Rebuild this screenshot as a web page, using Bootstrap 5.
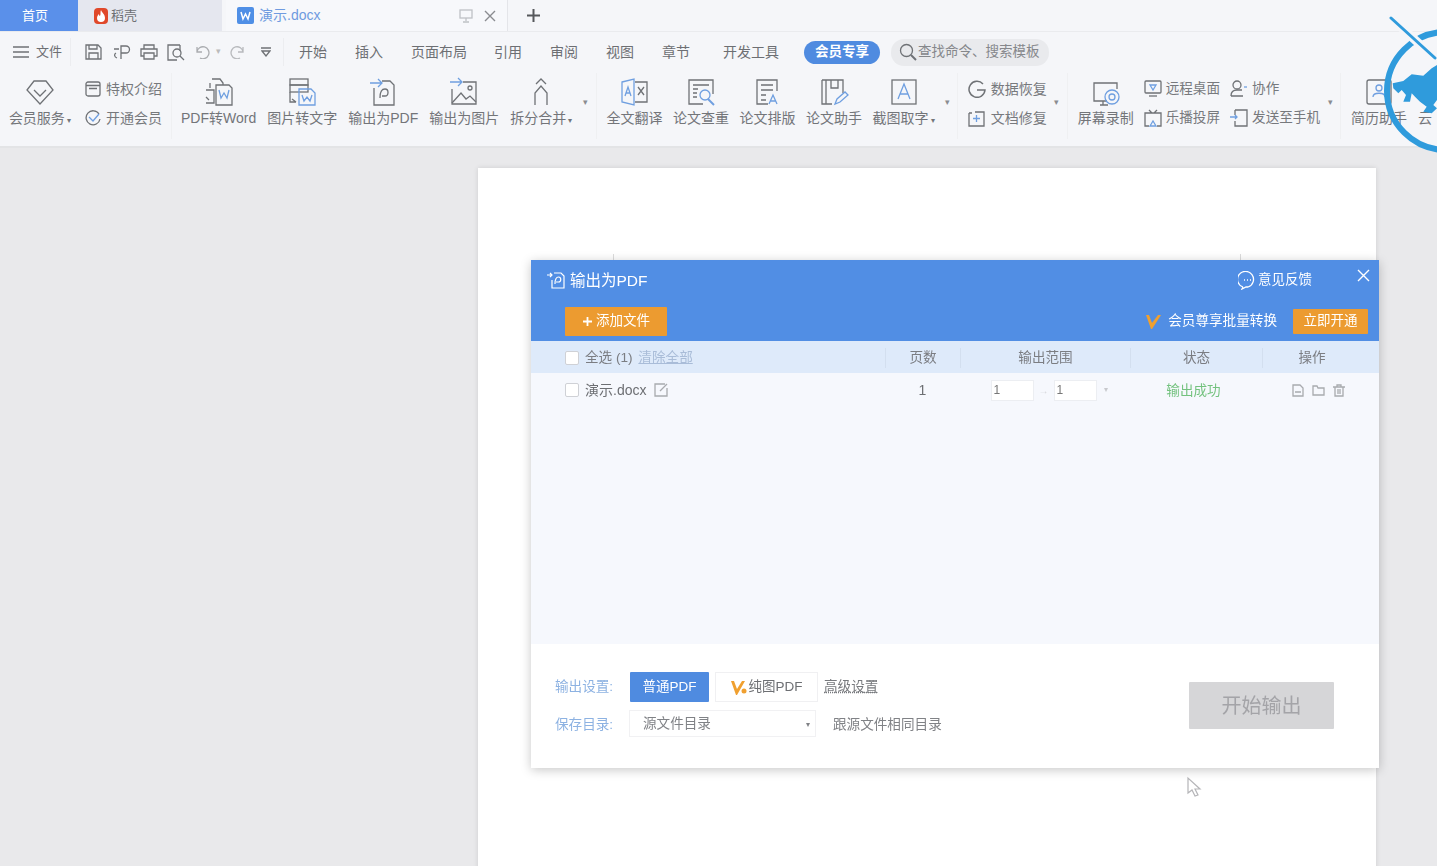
<!DOCTYPE html>
<html lang="zh"><head><meta charset="utf-8"><title>输出为PDF</title>
<link href="https://cdn.jsdelivr.net/npm/bootstrap@5.3.0/dist/css/bootstrap.min.css" rel="stylesheet">
<style>
html,body{height:866px;overflow:hidden}
body{background:#e9e9eb;font-family:"Liberation Sans","Noto Sans CJK SC",sans-serif;color:#6d6f73;font-size:13.6px;position:relative}
.shot{filter:blur(.5px);height:866px;position:relative;overflow:hidden}
svg{display:block;flex:none}
.ic{fill:none;stroke:#6f7276;stroke-width:1.3}
.ic .bl{stroke:#6f9fe0}
.tabbar{height:31px;background:#f5f6f9}
.tabh{width:78px;background:#5a90ea;color:#fff;font-size:13px;padding-left:22px}
.tabd{width:144px;background:#e5e7ef;padding-left:15px;gap:2px;font-size:13px}
.tabf{width:282px;margin-left:4px;background:#f7f8fb;padding-left:11px;border-right:1px solid #e4e5e9;color:#6f9be0;gap:5px;font-size:14px}
.menurow{height:39px;background:#f5f6f9;border-top:1px solid #eaebee;font-size:14px;padding:2px 0 0 13px}
.sepm{width:1px;height:28px;background:#ecedf0}
.pill{background:#4f8be0;color:#fff;border-radius:12px;width:76px;height:23px;font-size:13.5px;font-weight:700;margin-left:25px}
.searchp{background:#e9eaed;border-radius:13px;width:158px;height:27px;margin-left:11px;padding-left:8px;gap:1px;font-size:13.5px;color:#85878b}
.ribbon{height:78px;background:#f5f6f9;border-bottom:2px solid #e3e4e6;padding-left:5px;padding-top:7px}
.ribbon>*{flex:none}
.tool{height:62px;gap:1px;white-space:nowrap;font-size:14px;color:#737579}
.toolgap{gap:11px}
.toolgap2{gap:10.5px}
.stack{gap:9px;font-size:14px;white-space:nowrap;color:#77797d;padding-top:2px}
.stack>div{gap:5px;height:20px}
.stackn{font-size:13.6px}
.stackn>div{gap:4px}
.sepr{width:1px;height:66px;background:#eff0f2;margin-top:-4px}
.dots{color:#8a8c90;font-size:9px;line-height:1;margin-top:21px;width:10px;text-align:center}
.sheet{position:absolute;left:478px;top:168px;width:898px;height:720px;background:#fff;box-shadow:0 0 5px rgba(0,0,0,.12)}
.mark1,.mark2{position:absolute;top:86px;width:1px;height:6px;background:#dcdcdc}
.mark1{left:135px}.mark2{left:762px}
.dlg{position:absolute;left:531px;top:260px;width:848px;height:508px;background:#fff;box-shadow:0 2px 10px rgba(0,0,0,.22)}
.dlgtop{height:81px;background:#518ee4;color:#fff}
.dlgt1{height:41px;padding:0 9px 0 16px;font-size:15.5px;gap:4px}
.dlgt2{height:40px;padding:0 11px 0 34px}
.addb{width:102px;height:29px;background:#ec9b30;color:#fff;font-size:13.5px;border-radius:1px;gap:3px}
.openb{width:75px;height:25px;background:#ec9b30;color:#fff;font-size:13.5px;border-radius:1px;margin-left:16px}
.grid5{display:grid;grid-template-columns:354px 75px 170px 132px 1fr;align-items:center}
.thead{height:32px;background:#deeafa;color:#7b7d82;font-size:13.6px;padding-top:1px}
.thead>div{border-left:1px solid #d3dfef;height:20px;line-height:20px;text-align:center}
.thead>div:first-child{border:0;text-align:left}
.thead>div:last-child{padding-right:18px}
.tbody{height:271px;background:#f6f8fd}
.trow{height:34px;font-size:14px;text-align:center}
.trow>div:first-child{text-align:left}
.cbx{width:14px;height:14px;background:#fff;border:1px solid #cfd1d6;border-radius:2px;margin-left:34px;margin-right:6px;flex:none}
.clr{color:#a9bcd8;text-decoration:underline;margin-left:2px}
.ninp{width:43px;height:21px;background:#fff;border:1px solid #eceef2;font-size:12px;line-height:19px;text-align:left;padding-left:2px;color:#777}
.okst{color:#74c27f;font-size:13.6px;padding:2px 5px 0 0}
.dlgfoot{flex:1;padding:28px 45px 0 24px}
.lbl{color:#8db2e2;font-size:13.6px;width:75px;padding-top:1px}
.lbl2{padding-top:3px}
.btnb{width:79px;height:30px;background:#4f8be0;color:#fff;font-size:13.5px;border-radius:1px}
.btnw{width:103px;height:30px;background:#fff;border:1px solid #f0f0f2;font-size:13.5px;margin-left:6px;gap:1px}
.adv{margin-left:6px;padding-top:1px;text-decoration:underline;text-decoration-style:dotted;font-size:13.6px;color:#77797d}
.selb{width:187px;height:27px;border:1px solid #f1f1f3;padding:2px 5px 0 13px;margin-left:-1px;font-size:13.6px;color:#808286}
.same{margin-left:17px;padding-top:3px;font-size:13.6px;color:#808286}
.startb{width:145px;height:47px;background:#d6d6d8;color:#a4a4a8;font-size:20px;border-radius:1px;margin-top:10px;padding-top:1px}
.logo,.cursor{position:absolute}
.logo{left:1380px;top:10px}
.cursor{left:1186px;top:776px}
</style></head><body><div class="shot">

<div class="tabbar d-flex align-items-stretch">
 <div class="tabh d-flex align-items-center">首页</div>
 <div class="tabd d-flex align-items-center">
  <svg width="16" height="18" viewBox="0 0 16 18"><rect x="1" y="1" width="14" height="16" rx="4" fill="#e0482a"/><path d="M8 3c1 3 4 4 4 8a4 4 0 0 1-8 0c0-2 1-3 2-4 0 1 .5 2 1 2 1-2 0-4 1-6z" fill="#fff"/></svg>
  稻壳</div>
 <div class="tabf d-flex align-items-center">
  <svg width="17" height="17" viewBox="0 0 17 17"><rect width="17" height="17" rx="2" fill="#4f8fe6"/><path d="M4 5l2 7 2.500-5 2.500 5 2-7" fill="none" stroke="#fff" stroke-width="1.500"/></svg>
  <span>演示.docx</span>
  <svg class="ic ms-auto" width="14" height="14" viewBox="0 0 14 14" style="stroke:#bfc1c5"><rect x="1" y="1" width="12" height="8"/><path d="M7 9v3M4 13h6"/></svg>
  <svg class="ic" style="margin:0 10px 0 5px" width="14" height="14" viewBox="0 0 14 14"><path d="M2 2l10 10M12 2L2 12" stroke="#8a8c90" stroke-width="1.400"/></svg>
 </div>
 <div class="d-flex align-items-center" style="margin-left:18px"><svg width="15" height="15" viewBox="0 0 15 15"><path d="M7.500 1v13M1 7.500h13" stroke="#55575b" stroke-width="2"/></svg></div>
</div>

<div class="menurow d-flex align-items-center">
 <svg class="ic" width="16" height="12" viewBox="0 0 16 12"><path d="M0 1h16M0 6h16M0 11h16"/></svg>
 <span style="margin:0 8px 0 7px;font-size:13px">文件</span><div class="sepm"></div>
 <svg class="ic" style="margin-left:14px" width="17" height="16" viewBox="0 0 17 16"><path d="M1 1h12l3 3v11H1zM4 1v4h8V1M4 15V9h9v6"/></svg>
 <svg class="ic" style="margin-left:11px" width="18" height="17" viewBox="0 0 18 17"><path d="M8 2h5a3 3 0 0 1 0 7H8V2zM8 9v6M1 5h5M3 9c-2 1-2 4 1 5"/></svg>
 <svg class="ic" style="margin-left:9px" width="18" height="16" viewBox="0 0 18 16"><path d="M4 5V1h10v4M4 12H1V5h16v7h-3M4 9h10v6H4z"/></svg>
 <svg class="ic" style="margin-left:9px" width="18" height="17" viewBox="0 0 18 17"><path d="M13 1H1v15h9M13 1v6"/><circle cx="10" cy="9" r="4"/><path d="M13 12l4 4"/></svg>
 <svg class="ic" style="margin-left:11px;opacity:.55" width="15" height="13" viewBox="0 0 15 13"><path d="M1 1v5h5M1 6a6 6 0 1 1 3 6"/></svg>
 <span style="margin:0 8px 0 5px;font-size:9px;color:#bbb">▾</span>
 <svg class="ic" style="opacity:.45" width="15" height="13" viewBox="0 0 15 13"><path d="M14 1v5H9M14 6a6 6 0 1 0-3 6"/></svg>
 <svg class="ic" style="margin:0 12px 0 17px" width="10" height="10" viewBox="0 0 10 10"><path d="M0 1h10M1 4l4 5 4-5z"/></svg>
 <div class="sepm"></div>
 <span style="margin-left:15px">开始</span>
 <span style="margin-left:28px">插入</span>
 <span style="margin-left:28px">页面布局</span>
 <span style="margin-left:27px">引用</span>
 <span style="margin-left:28px">审阅</span>
 <span style="margin-left:28px">视图</span>
 <span style="margin-left:28px">章节</span>
 <span style="margin-left:33px">开发工具</span>
 <div class="pill d-flex align-items-center justify-content-center">会员专享</div>
 <div class="searchp d-flex align-items-center">
  <svg class="ic" width="18" height="18" viewBox="0 0 18 18"><circle cx="7.500" cy="7.500" r="6"/><path d="M12 12l5 5" stroke-width="2"/></svg>查找命令、搜索模板</div>
</div>

<div class="ribbon d-flex">
 <div class="tool d-flex flex-column align-items-center" style="width:70px">
  <svg class="ic" width="30" height="30" viewBox="0 0 30 30"><path d="M9 4h12l7 9-13 14L2 13zM9 13l6 6 6-6"/></svg>
  <span>会员服务<small style="font-size:8px"> ▾</small></span></div>
 <div class="stack d-flex flex-column" style="margin-left:10px;width:76px">
  <div class="d-flex align-items-center"><svg class="ic" width="16" height="16" viewBox="0 0 16 16"><rect x="1" y="1" width="14" height="14" rx="2"/><path d="M1 4.500h14M4 7.500h8"/></svg>特权介绍</div>
  <div class="d-flex align-items-center"><svg class="ic" width="16" height="16" viewBox="0 0 16 16"><path d="M14 4a7 7 0 1 0 1 5"/><path class="bl" d="M4 7l4 4 6-7"/></svg>开通会员</div>
 </div>
 <div class="sepr" style="margin-left:10px"></div>

 <div class="d-flex toolgap" style="margin-left:9px">
  <div class="tool d-flex flex-column align-items-center"><svg class="ic" width="30" height="30" viewBox="0 0 30 30"><path d="M8 2h8l3 4v2M6 6v5M2 13h8v13H2M2 20l3 3M12 8h13l3 3v17H12z"/><path class="bl" d="M15 13l2 8 3-5 3 5 2-8"/></svg><span>PDF转Word</span></div>
  <div class="tool d-flex flex-column align-items-center"><svg class="ic" width="30" height="30" viewBox="0 0 30 30"><rect x="3" y="2" width="18" height="6"/><rect x="3" y="8" width="18" height="7"/><path d="M3 15v10h6M5 22l4 3"/><path class="bl" d="M12 12h12l4 4v12H12zM15 18l2 6 3-4 3 4 2-6"/></svg><span>图片转文字</span></div>
  <div class="tool d-flex flex-column align-items-center"><svg class="ic" width="30" height="30" viewBox="0 0 30 30"><path d="M14 4h8l4 4v20H6V11"/><path d="M12 21c0-9 4-9 5-9 4 0 4 7 0 7h-3"/><path class="bl" d="M2 6h12M10 2l4 4-4 4"/></svg><span>输出为PDF</span></div>
  <div class="tool d-flex flex-column align-items-center"><svg class="ic" width="30" height="30" viewBox="0 0 30 30"><path d="M14 5h13v22H3V12"/><path d="M3 26l9-10 5 6 4-3 6 6"/><circle cx="21" cy="11" r="2"/><path class="bl" d="M1 5h11M9 1l4 4-4 4"/></svg><span>输出为图片</span></div>
  <div class="tool d-flex flex-column align-items-center"><svg class="ic" width="30" height="30" viewBox="0 0 30 30"><path d="M9 28V16l6-7 6 7v12M10 7l5-5 5 5"/></svg><span>拆分合并<small style="font-size:8px"> ▾</small></span></div>
 </div>
 <div class="dots" style="margin-left:8px">▾</div>
 <div class="sepr" style="margin-left:6px"></div>

 <div class="d-flex toolgap2" style="margin-left:9px">
  <div class="tool d-flex flex-column align-items-center"><svg class="ic" width="30" height="30" viewBox="0 0 30 30"><path d="M16 5h12v20H16"/><path class="bl" d="M3 5l12-3v26L3 25zM6 19l3-9 3 9M7 16h4" /><path d="M19 10l6 8M25 10l-6 8"/></svg><span>全文翻译</span></div>
  <div class="tool d-flex flex-column align-items-center"><svg class="ic" width="30" height="30" viewBox="0 0 30 30"><path d="M17 27H3V3h24v14M7 8h16M7 12h5M7 16h4M7 20h4"/><circle class="bl" cx="19" cy="18" r="5"/><path class="bl" d="M22 22l6 6" stroke-width="2"/></svg><span>论文查重</span></div>
  <div class="tool d-flex flex-column align-items-center"><svg class="ic" width="30" height="30" viewBox="0 0 30 30"><path d="M25 14V3H5v24h11M9 8h12M9 13h12M9 18h5M9 23h5"/><path class="bl" d="M17 27l4-9 4 9M18.500 24h5"/></svg><span>论文排版</span></div>
  <div class="tool d-flex flex-column align-items-center"><svg class="ic" width="30" height="30" viewBox="0 0 30 30"><path d="M3 3h21v13M3 3v24h10M7 3v24M12 3v8h7V3"/><path class="bl" d="M16 27l2-5 8-7 3 3-8 7z"/></svg><span>论文助手</span></div>
  <div class="tool d-flex flex-column align-items-center"><svg class="ic" width="30" height="30" viewBox="0 0 30 30"><rect x="3" y="3" width="24" height="24"/><path class="bl" d="M9 22l6-15 6 15M11 17h8"/></svg><span>截图取字<small style="font-size:8px"> ▾</small></span></div>
 </div>
 <div class="dots" style="margin-left:8px">▾</div>
 <div class="sepr" style="margin-left:4px"></div>

 <div class="stack d-flex flex-column" style="margin-left:10px">
  <div class="d-flex align-items-center"><svg class="ic" width="18" height="18" viewBox="0 0 18 18"><path d="M15 4a8 8 0 1 0 2 6H9" stroke-width="1.500"/></svg>数据恢复</div>
  <div class="d-flex align-items-center"><svg class="ic" width="18" height="18" viewBox="0 0 18 18"><path d="M1 4h3M1 4v13h15V3H7"/><path class="bl" d="M8.500 6v7M5 9.500h7"/></svg>文档修复</div>
 </div>
 <div class="dots" style="margin-left:5px">▾</div>
 <div class="sepr" style="margin-left:5px"></div>

 <div class="tool d-flex flex-column align-items-center" style="margin-left:10px"><svg class="ic" width="30" height="30" viewBox="0 0 30 30"><path d="M26 12V6H3v18h13M9 28h8M12 24v4"/><circle class="bl" cx="21" cy="20" r="7"/><circle class="bl" cx="21" cy="20" r="3"/></svg><span>屏幕录制</span></div>
 <div class="stack stackn d-flex flex-column" style="margin-left:10px">
  <div class="d-flex align-items-center"><svg class="ic" width="18" height="18" viewBox="0 0 18 18"><rect x="1" y="1" width="16" height="12" rx="1"/><path d="M5 16h8"/><path class="bl" d="M6 5h6l-3 5z"/></svg>远程桌面</div>
  <div class="d-flex align-items-center"><svg class="ic" width="18" height="18" viewBox="0 0 18 18"><path d="M5 1l3 3M13 1l-3 3M5 17H1V4h16v13h-4"/><path class="bl" d="M6 17l3-5 3 5z"/></svg>乐播投屏</div>
 </div>
 <div class="stack stackn d-flex flex-column" style="margin-left:10px">
  <div class="d-flex align-items-center"><svg class="ic" width="18" height="18" viewBox="0 0 18 18"><circle cx="7" cy="5" r="4"/><path d="M1 16c0-5 3-6 6-6h5M1 16h12"/><path class="bl" d="M14 7h3"/></svg>协作</div>
  <div class="d-flex align-items-center"><svg class="ic" width="18" height="18" viewBox="0 0 18 18"><path d="M5 1h12v16H5v-5M5 6V1"/><path class="bl" d="M0 8h7M5 6l2 2-2 2"/></svg>发送至手机</div>
 </div>
 <div class="dots" style="margin-left:5px">▾</div>
 <div class="sepr" style="margin-left:5px"></div>
 <div class="tool d-flex flex-column align-items-center" style="margin-left:10px"><svg class="ic" width="30" height="30" viewBox="0 0 30 30"><rect x="3" y="3" width="24" height="24" rx="2"/><circle class="bl" cx="15" cy="11" r="3"/><path class="bl" d="M9 20c0-5 12-5 12 0"/></svg><span>简历助手</span></div>
 <div class="tool" style="margin-left:11px;padding-top:31px">云</div>
</div>

<div class="sheet"><div class="mark1"></div><div class="mark2"></div></div>

<div class="dlg d-flex flex-column">
 <div class="dlgtop">
  <div class="dlgt1 d-flex align-items-center">
   <svg width="19" height="19" viewBox="0 0 19 19" fill="none" stroke="#fff" stroke-width="1.200"><path d="M7 2h7l3 3v12H5V9M8 13c0-6 2-7 3.500-7 3 0 3 5 0 5H9"/><path d="M0 4h5M3 2l2 2-2 2"/></svg>
   <span>输出为PDF</span>
   <svg class="ms-auto" width="19" height="19" viewBox="0 0 19 19" fill="none" stroke="#fff" stroke-width="1.300"><path d="M5 16l-1 2 4-2h2a8 8 0 1 0-5 0"/><path d="M6 9h1M9 9h1M12 9h1" stroke-width="1.600"/></svg>
   <span style="font-size:13.5px;margin-right:41px;margin-left:-3px">意见反馈</span>
   <svg style="margin-top:-11px" width="13" height="13" viewBox="0 0 13 13"><path d="M1 1l11 11M12 1L1 12" stroke="#fff" stroke-width="1.400"/></svg>
  </div>
  <div class="dlgt2 d-flex align-items-center">
   <div class="addb d-flex align-items-center justify-content-center"><svg width="11" height="11" viewBox="0 0 11 11"><path d="M5.500 1v9M1 5.500h9" stroke="#fff" stroke-width="1.800"/></svg>添加文件</div>
   <svg class="ms-auto" style="margin-right:7px" width="15" height="15" viewBox="0 0 15 15"><path d="M0 1l3 0 3 8 6-8h3L6 15H5z" fill="#f0a030"/></svg>
   <span style="font-size:13.6px">会员尊享批量转换</span>
   <div class="openb d-flex align-items-center justify-content-center">立即开通</div>
  </div>
 </div>
 <div class="thead grid5">
  <div class="d-flex align-items-center"><span class="cbx"></span>全选 (1)&nbsp;<span class="clr">清除全部</span></div>
  <div>页数</div><div>输出范围</div><div>状态</div><div>操作</div>
 </div>
 <div class="tbody">
  <div class="trow grid5">
   <div class="d-flex align-items-center"><span class="cbx"></span>演示.docx
    <svg class="ic ms-2" style="stroke:#a8aaae" width="14" height="14" viewBox="0 0 14 14"><path d="M11 1H1v12h12V5M6 8l7-7"/></svg></div>
   <div>1</div>
   <div class="d-flex align-items-center justify-content-center" style="padding-right:3px"><div class="ninp">1</div><span class="text-center" style="color:#d5d6da;font-size:10px;width:20px">→</span><div class="ninp">1</div><span class="ms-1" style="color:#c8c9cd;font-size:8px;margin-right:-14px;width:10px">▾</span></div>
   <div class="okst">输出成功</div>
   <div class="d-flex align-items-center justify-content-center gap-2" style="padding-right:5px">
    <svg class="ic" style="stroke:#a8aaae" width="12" height="13" viewBox="0 0 12 13"><path d="M1 1h7l3 3v8H1zM3 8h6"/></svg>
    <svg class="ic" style="stroke:#a8aaae" width="13" height="12" viewBox="0 0 13 12"><path d="M1 2h4l1 2h6v7H1z"/></svg>
    <svg class="ic" style="stroke:#a8aaae" width="12" height="13" viewBox="0 0 12 13"><path d="M0 3h12M4 3V1h4v2M2 3v9h8V3M5 5v5M7 5v5"/></svg>
   </div>
  </div>
 </div>
 <div class="dlgfoot d-flex">
  <div class="flex-grow-1">
   <div class="d-flex align-items-center">
    <span class="lbl">输出设置:</span>
    <div class="btnb d-flex align-items-center justify-content-center">普通PDF</div>
    <div class="btnw d-flex align-items-center justify-content-center"><svg width="17" height="15" viewBox="0 0 17 15"><path d="M0 1h3l3 8 5-8h3L6 15H5z" fill="#f0a030"/><circle cx="13" cy="11" r="2.500" fill="#f0a030"/></svg>纯图PDF</div>
    <span class="adv">高级设置</span>
   </div>
   <div class="d-flex align-items-center" style="margin-top:8px">
    <span class="lbl lbl2">保存目录:</span>
    <div class="selb d-flex align-items-center justify-content-between"><span>源文件目录</span><span style="font-size:8px">▾</span></div>
    <span class="same">跟源文件相同目录</span>
   </div>
  </div>
  <div class="startb d-flex align-items-center justify-content-center">开始输出</div>
 </div>
</div>

<svg class="cursor" width="16" height="22" viewBox="0 0 16 22" fill="#fff" stroke="#b5b5b8" stroke-width="1.200"><path d="M2 2v15l4-3 3 6 3-1-3-6h5z"/></svg>

<svg class="logo" width="57" height="150" viewBox="0 0 57 150"><circle cx="66" cy="81" r="59" fill="none" stroke="#2f9bdc" stroke-width="6"/><path d="M11 8l46 42" stroke="#f5f6f9" stroke-width="9"/><path d="M11 8l44 40" stroke="#2f9bdc" stroke-width="3" stroke-linecap="round"/><path d="M12.700 73.300L23.300 71 31.700 64.300 43.300 65.700 51.700 58.300 57 55V90L53.300 95 57 98.300 51.700 103.300 43.300 101.700 46.700 96.700 40 91.700 35 86.700 31.700 83.300 30 91.700 23.300 91.700 26 85 21.700 80 18.300 83.300 13.300 78.300z" fill="#2f9bdc"/></svg>

</div></body></html>
